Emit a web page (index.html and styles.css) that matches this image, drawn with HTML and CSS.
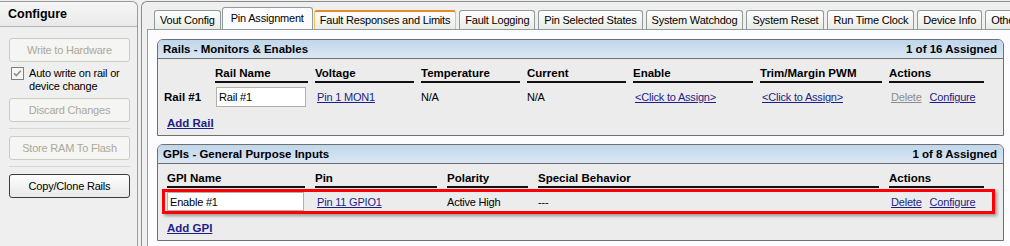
FILE: index.html
```html
<!DOCTYPE html>
<html lang="en">
<head>
    <meta charset="UTF-8">
    <meta name="viewport" content="width=device-width, initial-scale=1.0">
    <title>Pin Assignment</title>
    <link rel="stylesheet" href="styles.css">
</head>
<body>
    <div class="side">
        <div class="side-head">Configure</div>
        <div class="side-body">
            <button class="btn" disabled>Write to Hardware</button>
            <label class="check">
                <svg width="13" height="13" viewBox="0 0 13 13">
                    <rect x="0.5" y="0.5" width="12" height="12" fill="#f6f6f4" stroke="#7f7f7f"/>
                    <polyline points="3,6.2 5.3,8.6 9.8,3.8" fill="none" stroke="#8c8c8c" stroke-width="1.6"/>
                </svg>
                <span>Auto write on rail or<br>device change</span>
            </label>
            <button class="btn" disabled>Discard Changes</button>
            <hr class="sep">
            <button class="btn" disabled>Store RAM To Flash</button>
            <hr class="sep">
            <button class="btn">Copy/Clone Rails</button>
        </div>
    </div>

    <div class="main">
        <div class="tabs">
            <div class="tab">Vout Config</div>
            <div class="tab active">Pin Assignment</div>
            <div class="tab hot">Fault Responses and Limits</div>
            <div class="tab">Fault Logging</div>
            <div class="tab">Pin Selected States</div>
            <div class="tab">System Watchdog</div>
            <div class="tab">System Reset</div>
            <div class="tab">Run Time Clock</div>
            <div class="tab">Device Info</div>
            <div class="tab">Other</div>
        </div>
        <div class="page">
            <div class="group">
                <div class="group-head">
                    <span>Rails - Monitors &amp; Enables</span>
                    <span>1 of 16 Assigned</span>
                </div>
                <div class="group-body rails">
                    <div class="grid rail-grid">
                        <div></div>
                        <div class="th">Rail Name</div>
                        <div class="th">Voltage</div>
                        <div class="th">Temperature</div>
                        <div class="th">Current</div>
                        <div class="th">Enable</div>
                        <div class="th">Trim/Margin PWM</div>
                        <div class="th last">Actions</div>

                        <div class="row-label">Rail #1</div>
                        <div><input class="name rail-name" type="text" value="Rail #1"></div>
                        <div><a class="link" href="#">Pin 1 MON1</a></div>
                        <div>N/A</div>
                        <div>N/A</div>
                        <div><a class="link" href="#">&lt;Click to Assign&gt;</a></div>
                        <div><a class="link" href="#">&lt;Click to Assign&gt;</a></div>
                        <div class="actions"><a class="link off" href="#">Delete</a><a href="#">Configure</a></div>
                    </div>
                    <a class="add" href="#">Add Rail</a>
                </div>
            </div>

            <div class="group">
                <div class="group-head">
                    <span>GPIs - General Purpose Inputs</span>
                    <span>1 of 8 Assigned</span>
                </div>
                <div class="group-body gpis">
                    <div class="grid gpi-grid head-row">
                        <div class="th">GPI Name</div>
                        <div class="th">Pin</div>
                        <div class="th">Polarity</div>
                        <div class="th">Special Behavior</div>
                        <div class="th last">Actions</div>
                    </div>
                    <div class="grid gpi-grid pick">
                        <div><input class="name gpi-name" type="text" value="Enable #1"></div>
                        <div><a class="link" href="#">Pin 11 GPIO1</a></div>
                        <div>Active High</div>
                        <div>---</div>
                        <div class="actions"><a class="link" href="#">Delete</a><a href="#">Configure</a></div>
                    </div>
                    <a class="add" href="#">Add GPI</a>
                </div>
            </div>
        </div>
    </div>
</body>
</html>
```

FILE: styles.css
```css
body {
    margin: 0;
    width: 1010px;
    height: 246px;
    overflow: hidden;
    display: flex;
    align-items: flex-start;
    background-color: #efefef;
    font-family: "Liberation Sans", Arial, sans-serif;
    font-size: 11px;
    letter-spacing: -0.2px;
    color: #000;
}

/* left configure panel */
.side {
    flex: none;
    width: 138px;
    height: 245px;
    box-sizing: border-box;
    margin-top: 1px;
    border-top: 1px solid #9a9a9a;
    border-right: 1px solid #9a9a9a;
    border-top-right-radius: 6px;
    background-color: #efefef;
}
.side-head {
    height: 24px;
    line-height: 24px;
    padding-left: 8px;
    font-weight: bold;
    font-size: 12.5px;
    letter-spacing: 0;
    border-bottom: 1px solid #b5b5b5;
    border-top-right-radius: 6px;
    background: linear-gradient(#f6f6f6, #e9e9e9);
}
.side-body {
    display: flex;
    flex-direction: column;
    align-items: flex-start;
    padding: 11px 0 0 9px;
}
.btn {
    width: 121px;
    height: 24px;
    padding: 0;
    font: inherit;
    letter-spacing: inherit;
    color: #000;
    border: 1px solid #3c3c3c;
    border-radius: 3px;
    background: linear-gradient(#fefefe, #e8e8e8);
}
.btn:disabled {
    color: #aca899;
    border-color: #cdcbc0;
    background: #f5f5f3;
}
.check {
    display: flex;
    gap: 5px;
    margin: 5px 0 5px 2px;
    line-height: 13px;
}
.check svg {
    flex: none;
}
.sep {
    width: 121px;
    height: 0;
    margin: 6px 0 7px;
    border: 0;
    border-top: 1px solid #d6d6d6;
}

/* right tabbed panel */
.main {
    flex: none;
    width: 880px;
    margin: 1px 0 0 3px;
    padding-left: 5px;
    border-top: 1px solid #8c8c8c;
    border-left: 1px solid #8c8c8c;
    border-top-left-radius: 6px;
}
.tabs {
    display: flex;
    align-items: flex-end;
    height: 22px;
    margin-top: 5px;
    padding-left: 7px;
    white-space: nowrap;
    overflow: hidden;
}
.tab {
    flex: none;
    height: 19px;
    box-sizing: border-box;
    padding: 0 5px;
    margin-left: 3px;
    line-height: 18px;
    border: 1px solid #919b9c;
    border-bottom: 0;
    border-radius: 3px 3px 0 0;
    background: linear-gradient(#fefefe, #ebebe5);
}
.tab:first-child {
    margin-left: 0;
}
.tab.active {
    position: relative;
    z-index: 1;
    height: 23px;
    margin: 0 0 -1px 1px;
    padding: 0 8px;
    line-height: 20px;
    background: #fcfcfe;
}
.tab.active + .tab {
    margin-left: 1px;
}
.tab.hot {
    border-color: #f3c460;
    border-top: 2px solid #e68b2c;
    line-height: 17px;
}
.page {
    padding: 9px 0 5px 9px;
    border: 1px solid #919b9c;
    border-bottom: 0;
    background-color: #fcfcfe;
}

/* group boxes */
.group {
    width: 847px;
    box-sizing: border-box;
    margin-bottom: 8px;
    border: 1px solid #6f6f6f;
    border-radius: 6px 6px 0 0;
    background-color: #ececec;
}
.group:last-child {
    margin-bottom: 0;
}
.group-head {
    display: flex;
    justify-content: space-between;
    height: 18px;
    line-height: 18px;
    padding: 0 6px 0 5px;
    font-weight: bold;
    font-size: 11.5px;
    letter-spacing: 0;
    border-bottom: 1px solid #6f6f6f;
    border-radius: 5px 5px 0 0;
    background: linear-gradient(#c0d6eb, #dae7f3);
}
.rails {
    padding: 6px 0 5px 6px;
}
.gpis {
    padding: 6px 0 5px 9px;
}
.grid {
    display: grid;
    align-items: center;
}
.rail-grid {
    grid-template-columns: 51px 100px 106px 106px 106px 127px 129px 95px;
    grid-template-rows: 18px 20px;
    row-gap: 4px;
}
.gpi-grid {
    grid-template-columns: 148px 132px 91px 351px 95px;
}
.head-row {
    height: 18px;
}
.th {
    align-self: end;
    margin-right: 7px;
    line-height: 16px;
    font-weight: bold;
    font-size: 11.5px;
    letter-spacing: 0;
    border-bottom: 2px solid #111;
}
.gpi-grid .th {
    margin-right: 10px;
}
.th.last,
.gpi-grid .th.last {
    margin-right: 0;
}
.row-label {
    font-weight: bold;
    font-size: 11.5px;
    letter-spacing: 0;
}
.name {
    display: block;
    box-sizing: border-box;
    padding: 0 2px;
    font: inherit;
    letter-spacing: inherit;
    border: 1px solid #b7afa2;
    background: #fff;
    outline: none;
}
.rail-name {
    width: 90px;
    height: 20px;
    margin-left: 1px;
}
.gpi-name {
    width: 137px;
    height: 19px;
}
a {
    color: #1e1e8a;
    text-decoration: underline;
}
.link {
    margin-left: 2px;
}
.off {
    color: #8c8c8c;
}
.actions a + a {
    margin-left: 8px;
}
.pick {
    width: 833px;
    height: 25px;
    box-sizing: border-box;
    margin: 1px 0 0 -5px;
    padding-left: 2px;
    border: 3px solid #f00;
    box-shadow: 2px 2px 3px rgba(0, 0, 0, 0.35);
}
.add {
    display: block;
    width: max-content;
    margin: 9px 0 0 3px;
    line-height: 14px;
    font-weight: bold;
    font-size: 11.5px;
    letter-spacing: 0;
}
.gpis .add {
    margin: 7px 0 0 0;
}
```
